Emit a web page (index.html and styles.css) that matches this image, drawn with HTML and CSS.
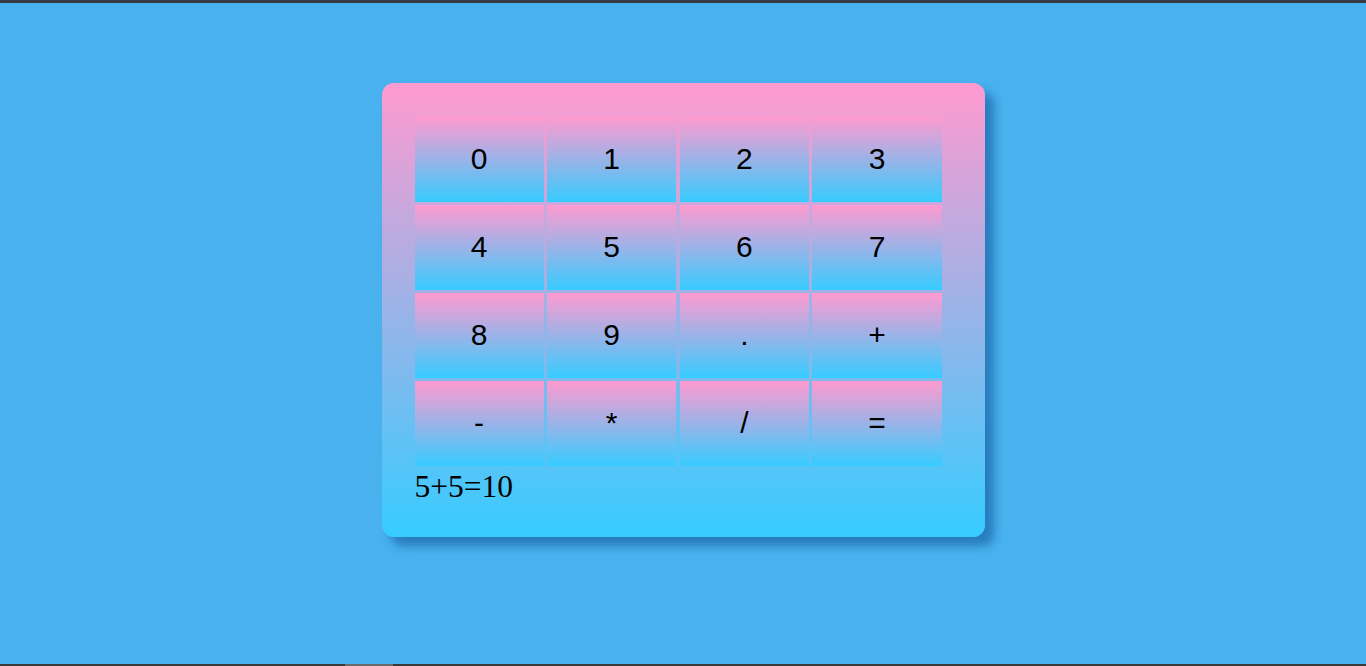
FILE: index.html
```html
<!DOCTYPE html>
<html>
<head>
<meta charset="utf-8">
<link rel="stylesheet" href="styles.css">
</head>
<body>
<div class="topbar"></div>
<main class="stage">
  <div class="calc">
    <div class="keys">
      <button class="key">0</button>
      <button class="key">1</button>
      <button class="key">2</button>
      <button class="key">3</button>
      <button class="key">4</button>
      <button class="key">5</button>
      <button class="key">6</button>
      <button class="key">7</button>
      <button class="key">8</button>
      <button class="key">9</button>
      <button class="key">.</button>
      <button class="key">+</button>
      <button class="key">-</button>
      <button class="key">*</button>
      <button class="key">/</button>
      <button class="key">=</button>
    </div>
    <div class="result">5+5=10</div>
  </div>
</main>
<div class="bottombar"><div class="thumb"></div></div>
</body>
</html>
```
FILE: styles.css
```css
html, body {
  margin: 0;
  padding: 0;
  height: 666px;
  overflow: hidden;
}
body {
  display: flex;
  flex-direction: column;
  background: #48b1ee;
  font-family: "Liberation Serif", "Times New Roman", serif;
}
.topbar {
  height: 3px;
  background: #383b48;
  flex: none;
}
.stage {
  flex: 1;
  display: flex;
  justify-content: center;
  align-items: flex-start;
  padding-top: 80px;
}
.calc {
  width: 603px;
  box-sizing: border-box;
  padding: 34px 33px 33px 33px;
  border-radius: 12px;
  background: linear-gradient(to bottom, #ff9ad0, #36ccff);
  box-shadow: 9px 9px 10px rgba(0, 60, 130, 0.45);
}
.keys {
  width: 527px;
  display: grid;
  grid-template-columns: repeat(4, 1fr);
  grid-auto-rows: 85px;
  column-gap: 3.67px;
  row-gap: 3px;
}
.key {
  border: none;
  margin: 0;
  padding: 0 0 2px 0;
  background: linear-gradient(to bottom, #ff9ad0, #36ccff);
  font-family: "Liberation Sans", Arial, sans-serif;
  font-size: 30px;
  color: #000;
}
.result {
  margin-top: 4px;
  font-size: 31.5px;
  line-height: 34px;
  color: #000;
}
.bottombar {
  height: 2px;
  flex: none;
  background: #393939;
  position: relative;
}
.thumb {
  position: absolute;
  left: 345px;
  top: 0;
  width: 48px;
  height: 2px;
  background: #6a6a6a;
}
```
